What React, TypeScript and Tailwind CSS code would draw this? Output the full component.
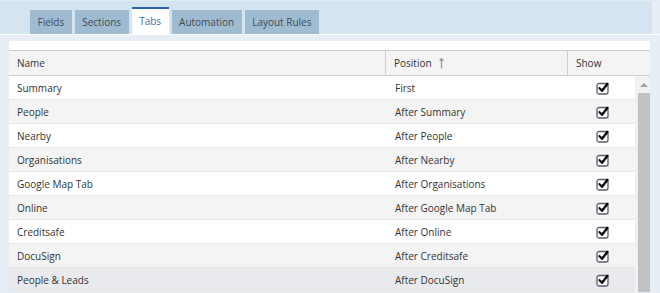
import React from "react";

const tabs = ["Fields", "Sections", "Tabs", "Automation", "Layout Rules"];

const rows = [
    ["Summary", "First"],
    ["People", "After Summary"],
    ["Nearby", "After People"],
    ["Organisations", "After Nearby"],
    ["Google Map Tab", "After Organisations"],
    ["Online", "After Google Map Tab"],
    ["Creditsafe", "After Online"],
    ["DocuSign", "After Creditsafe"],
    ["People & Leads", "After DocuSign"],
];

const CheckBox = () => (
    <svg width="15" height="14" viewBox="0 0 15 14" aria-hidden="true">
        <rect x="1" y="2.5" width="11" height="10.5" rx="2" fill="#fff" stroke="#5e5870" strokeWidth="1.3"/>
        <path d="M3.5 7.2 L6 9.8 L11.5 2.8" fill="none" stroke="#000" strokeWidth="2.3" strokeLinecap="round"
              strokeLinejoin="round"/>
    </svg>
);

const SortUp = () => (
    <svg width="7" height="12" viewBox="0 0 7 12" aria-hidden="true">
        <path d="M3.5 1 L3.5 11.5" stroke="#8c9aab" strokeWidth="1.3"/>
        <path d="M1 4 L3.5 0.8 L6 4 Z" fill="#8c9aab"/>
    </svg>
);

export default function App() {
    return (
        <div className="w-[660px] h-[293px] overflow-hidden bg-[#e8eef6] font-['Open_Sans',sans-serif] text-[10px] text-[#333]">

            {/* Tab strip */}
            <div className="h-px bg-[#e4ecf3]"/>
            <div className="h-[33px] mr-[8px] bg-[#d4e5f1] flex items-end pl-[30px] gap-[3px]">
                {tabs.map((t) => t === "Tabs" ? (
                    <div key={t}
                         className="h-[27px] px-[7.5px] bg-white border-t-[2px] border-[#2d62aa] text-[#3d6ea6] flex items-center">
                        {t}
                    </div>
                ) : (
                    <div key={t}
                         className="h-[24px] px-[7.5px] bg-[#9fbbd2] text-[#3f4a55] flex items-center">
                        {t}
                    </div>
                ))}
            </div>
            <div className="h-px bg-white"/>

            {/* Panel */}
            <div className="pl-[9px] pr-[10px] pt-[6px]">
                <div className="bg-white pt-[9px]">
                    {/* Header */}
                    <div className="flex h-[26px] bg-[#f4f4f4] border-y border-[#cfcfcf] items-center">
                        <div className="w-[377px] pl-[8px] border-r border-[#cfcfcf] h-full flex items-center">Name</div>
                        <div className="w-[182px] pl-[8px] border-r border-[#cfcfcf] h-full flex items-center gap-[6px]">
                            Position <SortUp/>
                        </div>
                        <div className="flex-1 pl-[8px] h-full flex items-center">Show</div>
                    </div>

                    {/* Body */}
                    <div className="flex">
                        <div className="w-[626px]">
                            {rows.map(([name, pos], i) => (
                                <div key={name}
                                     className={`flex h-[24px] pt-px items-center border-b border-[#e6e6e6] ${i === 8 ? "bg-[#e9eaee]" : i % 2 ? "bg-[#f4f4f4]" : "bg-white"}`}>
                                    <div className="w-[378px] pl-[8px]">{name}</div>
                                    <div className="w-[182px] pl-[8px]">{pos}</div>
                                    <div className="flex-1 pl-[27px] flex items-center">
                                        <CheckBox/>
                                    </div>
                                </div>
                            ))}
                        </div>
                        {/* Scrollbar */}
                        <div className="flex-1 flex flex-col bg-[#f1f1f1] pl-[3px]">
                            <div className="h-[17px] flex items-center justify-center">
                                <div className="w-0 h-0 border-x-[4px] border-x-transparent border-b-[4px] border-b-[#a3a3a3]"/>
                            </div>
                            <div className="flex-1 bg-[#c1c1c1]"/>
                        </div>
                    </div>
                </div>
            </div>
        </div>
    );
}
